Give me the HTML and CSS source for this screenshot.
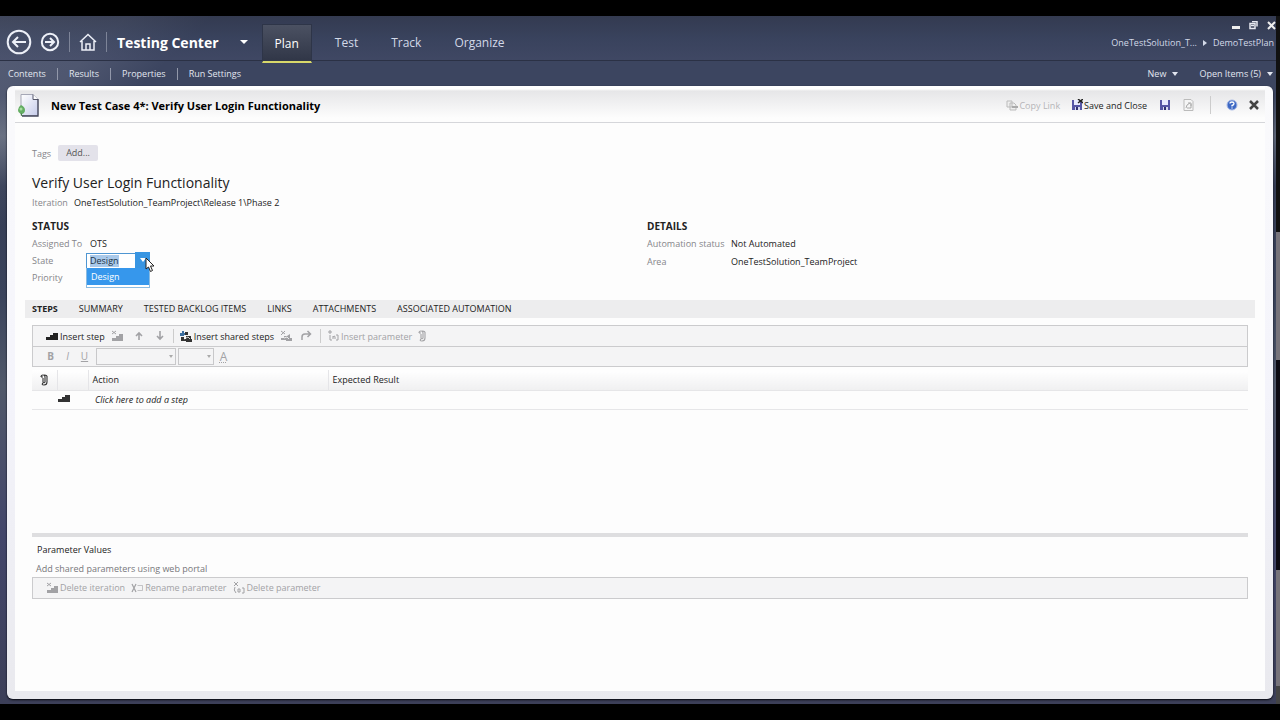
FILE: index.html
```html
<!DOCTYPE html>
<html lang="en">
<head>
<meta charset="utf-8">
<meta name="viewport" content="width=device-width, initial-scale=1">
<title>Testing Center</title>
<link rel="stylesheet" href="styles.css">
</head>
<body>
<svg class="sprite" aria-hidden="true">
  <symbol id="i-steps" viewBox="0 0 12 10"><path d="M0 6h4V4h3V2h5v7H0z" fill="currentColor"/></symbol>
  <symbol id="i-steps-x" viewBox="0 0 12 12"><path d="M1 1l4 3M5 1L1 4" stroke="currentColor" fill="none"/><path d="M1 8h4V6h3V4h4v7H1z" fill="currentColor"/></symbol>
  <symbol id="i-up" viewBox="0 0 10 12"><path d="M5 10V3M2 6l3-3 3 3" stroke="currentColor" stroke-width="1.6" fill="none"/></symbol>
  <symbol id="i-down" viewBox="0 0 10 12"><path d="M5 1v8M2 6l3 3 3-3" stroke="currentColor" stroke-width="1.6" fill="none"/></symbol>
  <symbol id="i-shared" viewBox="0 0 12 12"><path d="M0 3h2V1h2v2h3v2H4v1H0z" fill="#3b6ea0"/><path d="M5 2h3v3H5zM1 7h3v2h2V6h5v3h1v3H6v-1H1z" fill="#333"/><path d="M4 9l4-2 2 2" stroke="#fff" stroke-width=".8" fill="none"/></symbol>
  <symbol id="i-shared-x" viewBox="0 0 12 12"><path d="M1 1l4 3M5 1L1 5" stroke="currentColor" fill="none"/><path d="M1 8h3V6h3l3-2v4h2v3H6v-1H1z" fill="currentColor"/><path d="M4 8l3-1 2 2" stroke="#fff" stroke-width=".8" fill="none"/></symbol>
  <symbol id="i-redo" viewBox="0 0 12 12"><path d="M2 10V7q0-3 3-3h5M7.500 1l3 3-3 3" stroke="currentColor" stroke-width="1.500" fill="none"/></symbol>
  <symbol id="i-param" viewBox="0 0 12 12"><path d="M1 2h4M3 0v4M3 5v5h2M9 5h2v5H9M6 6v3M6 7q2-2 2 0v2" stroke="currentColor" fill="none"/></symbol>
  <symbol id="i-param-x" viewBox="0 0 12 12"><path d="M1 0l4 4M5 0L1 4M2 5q-2 3 1 6M9 6h2v5H9M5 7h2v3H5z" stroke="currentColor" fill="none"/></symbol>
  <symbol id="i-rename" viewBox="0 0 12 12"><path d="M1 2l4 8M5 2L1 10" stroke="currentColor" stroke-width="1.200" fill="none"/><path d="M6.500 3.500h5v5h-5" stroke="currentColor" fill="none" opacity=".6"/></symbol>
  <symbol id="i-clip" viewBox="0 0 8 12"><path d="M3 4v4q1 1.500 2 0V3Q5 1 3 1T1 3M7 2v6q0 3-3 3T3 9M1 3h2M7 2q-1-1-3-1" stroke="currentColor" stroke-width="1.100" fill="none"/></symbol>
  <symbol id="i-save" viewBox="0 0 12 12"><path d="M1 1h10v10H1z" fill="#5656a6"/><path d="M3 1h6v5H3z" fill="#e8eaff"/><path d="M4 8h5v3H4z" fill="#d9dbf2"/><path d="M5 8h2v3H5z" fill="#303070"/></symbol>
</svg>

<div class="screen">
  <div class="app">
    <header class="top">
      <button class="nav-btn" aria-label="Back"><svg width="26" height="26" viewBox="0 0 26 26"><circle cx="13" cy="13" r="11.300"/><path d="M20 13H7M12 8l-5 5 5 5"/></svg></button>
      <button class="nav-btn fwd" aria-label="Forward"><svg width="20" height="20" viewBox="0 0 20 20"><circle cx="10" cy="10" r="8.200"/><path d="M5 10h9M10 6l4 4-4 4"/></svg></button>
      <span class="rule"></span>
      <button class="nav-btn home" aria-label="Home"><svg width="20" height="20" viewBox="0 0 20 20"><path d="M2 10l8-7.500 8 7.500M4 9v9h12V9M8 18v-6h4v6" stroke-width="1.500"/></svg></button>
      <span class="rule"></span>
      <button class="center">Testing Center<span class="caret big"></span></button>
      <nav class="modes" aria-label="Activities">
        <a href="#" class="on">Plan</a><a href="#">Test</a><a href="#">Track</a><a href="#">Organize</a>
      </nav>
      <div class="top-right">
        <div class="win">
          <button aria-label="Minimize"><svg width="9" height="10"><path d="M1 5h8v3H1z" fill="#eee"/></svg></button>
          <button aria-label="Restore"><svg width="9" height="10"><path d="M3 .5h5v5M1 2.500h5v5H1zM2 4.500h3" fill="none" stroke="#e6e8f0" stroke-width="1.500"/></svg></button>
          <button aria-label="Close window"><svg width="9" height="10"><path d="M1 1l7 7M8 1L1 8" stroke="#eee" stroke-width="2"/></svg></button>
        </div>
        <div class="crumbs"><a href="#">OneTestSolution_T...</a><span class="tri"></span><a href="#">DemoTestPlan</a></div>
      </div>
    </header>

    <nav class="sub" aria-label="Plan">
      <a href="#">Contents</a><a href="#">Results</a><a href="#">Properties</a><a href="#">Run Settings</a>
      <div class="sub-right">
        <button>New<span class="caret"></span></button>
        <button>Open Items (5)<span class="caret"></span></button>
      </div>
    </nav>

    <main class="panel">
      <div class="panel-head">
        <svg class="doc" width="24" height="26" viewBox="0 0 24 26" aria-hidden="true">
          <defs><linearGradient id="pg" x2="1" y2="1"><stop stop-color="#fff"/><stop offset="1" stop-color="#c5cbea"/></linearGradient></defs>
          <path d="M4 2.500h12l5 5v16H4z" fill="url(#pg)" stroke="#a5a7b6"/><path d="M16 2.500v5h5" fill="#fff" stroke="#55576a"/><path d="M21 7v17H5" fill="none" stroke="#44475c" stroke-width="1.300"/>
          <path d="M4 13q4 2 4 5 0 3-3 4-4-1-4-4 0-3 3-5" fill="#63ad63"/><circle cx="4" cy="17" r="1.500" fill="#a6dda0"/><path d="M4 21l1 3" stroke="#498449"/>
        </svg>
        <h1>New Test Case 4*: Verify User Login Functionality</h1>
        <div class="actions">
          <button class="off" disabled><svg width="12" height="12" viewBox="0 0 12 12"><path d="M1 2h5v6H1zM4 4h4l2 2v5H4z" fill="#eee" stroke="#bbb"/><path d="M6 8h6" stroke="#aaa" stroke-width="2"/></svg>Copy Link</button>
          <button class="save-close"><svg width="12" height="12"><use href="#i-save"/><path d="M7 0l5 4M12 0L7 4" stroke="#222" stroke-width="1.500"/></svg>Save and Close</button>
          <button class="save" aria-label="Save"><svg width="12" height="12"><use href="#i-save"/></svg></button>
          <button class="refresh" aria-label="Refresh" disabled><svg width="11" height="12" viewBox="0 0 11 12"><path d="M1 .5h7l2 2v9H1z" fill="#f5f5f5" stroke="#bbb"/><path d="M3 9l1-3 3-2M8 5v4H4M5 4h3v3" fill="none" stroke="#aaa"/></svg></button>
          <span class="sep"></span>
          <button class="help" aria-label="Help"><svg width="12" height="12" viewBox="0 0 12 12"><circle cx="6" cy="6" r="5" fill="#3d68c4" stroke="#a9bbe6"/><path d="M4 4.500Q4 3 6 3t2 1.500Q8 6 6 6.500V7.500M6 8.500v1" stroke="#fff" stroke-width="1.300" fill="none"/></svg></button>
          <button aria-label="Close"><svg width="10" height="10"><path d="M1 1l8 8M9 1L1 9" stroke="#444" stroke-width="2.500"/></svg></button>
        </div>
      </div>

      <div class="content">
        <div class="tags"><span class="lbl">Tags</span><button>Add...</button></div>
        <h2>Verify User Login Functionality</h2>
        <div class="field iteration"><span class="lbl">Iteration</span><span>OneTestSolution_TeamProject\Release 1\Phase 2</span></div>

        <div class="groups">
          <section class="status">
            <h3>STATUS</h3>
            <div class="field"><span class="lbl">Assigned To</span><span>OTS</span></div>
            <div class="field"><label class="lbl" for="state">State</label>
              <div class="combo">
                <select id="state"><option>Design</option></select>
                <span class="combo-btn"><span class="caret"></span></span>
                <ul class="menu"><li>Design</li></ul>
                <svg class="cursor" width="10" height="16" viewBox="0 0 10 16" aria-hidden="true"><path d="M1 1v11l2.500-2 2 4.500 2-1L5.500 9H9z" fill="#fff" stroke="#222"/></svg>
              </div>
            </div>
            <div class="field"><span class="lbl">Priority</span></div>
          </section>
          <section class="details">
            <h3>DETAILS</h3>
            <div class="field"><span class="lbl">Automation status</span><span>Not Automated</span></div>
            <div class="field"><span class="lbl">Area</span><span>OneTestSolution_TeamProject</span></div>
          </section>
        </div>

        <nav class="tabs" aria-label="Test case sections">
          <a href="#" class="on">STEPS</a><a href="#">SUMMARY</a><a href="#">TESTED BACKLOG ITEMS</a><a href="#">LINKS</a><a href="#">ATTACHMENTS</a><a href="#">ASSOCIATED AUTOMATION</a>
        </nav>

        <div class="bars">
          <div class="bar">
            <button><svg width="12" height="10"><use href="#i-steps"/></svg>Insert step</button>
            <button disabled aria-label="Delete step"><svg width="12" height="12"><use href="#i-steps-x"/></svg></button>
            <button class="arrow" disabled aria-label="Move up"><svg width="10" height="12"><use href="#i-up"/></svg></button>
            <button class="arrow" disabled aria-label="Move down"><svg width="10" height="12"><use href="#i-down"/></svg></button>
            <span class="sep"></span>
            <button><svg width="12" height="12"><use href="#i-shared"/></svg>Insert shared steps</button>
            <button disabled aria-label="Create shared steps"><svg width="12" height="12"><use href="#i-shared-x"/></svg></button>
            <button class="redo" disabled aria-label="Redo"><svg width="12" height="12"><use href="#i-redo"/></svg></button>
            <span class="sep"></span>
            <button disabled><svg width="12" height="12"><use href="#i-param"/></svg>Insert parameter</button>
            <button disabled aria-label="Attach"><svg width="8" height="12"><use href="#i-clip"/></svg></button>
          </div>
          <div class="bar format">
            <button disabled><b>B</b></button><button disabled><i>I</i></button><button disabled><u>U</u></button>
            <div class="drop font"><select aria-label="Font" disabled></select><span class="caret"></span></div>
            <div class="drop size"><select aria-label="Size" disabled></select><span class="caret"></span></div>
            <button class="color" disabled>A</button>
          </div>
        </div>

        <table class="steps">
          <colgroup><col class="c1"><col class="c2"><col class="c3"><col></colgroup>
          <thead><tr><th><svg width="8" height="12" aria-label="Attachments"><use href="#i-clip"/></svg></th><th></th><th>Action</th><th>Expected Result</th></tr></thead>
          <tbody><tr><td></td><td><svg width="12" height="10" aria-hidden="true"><use href="#i-steps"/></svg></td><td><i>Click here to add a step</i></td><td></td></tr></tbody>
        </table>

        <section class="params">
          <h4>Parameter Values</h4>
          <p>Add shared parameters using web portal</p>
          <div class="bar">
            <button disabled><svg width="12" height="12"><use href="#i-steps-x"/></svg>Delete iteration</button>
            <button disabled><svg width="12" height="12"><use href="#i-rename"/></svg>Rename parameter</button>
            <button disabled><svg width="12" height="12"><use href="#i-param-x"/></svg>Delete parameter</button>
          </div>
        </section>
      </div>
    </main>
  </div>
  <div class="edge"></div>
</div>
</body>
</html>
```

FILE: styles.css
```css
* { box-sizing: border-box; }
body {
  margin: 0;
  background: #000;
  color: #222;
  font: 9px/17px "Open Sans", "Noto Sans", sans-serif;
}
h1, h2, h3, h4, p, ul { margin: 0; padding: 0; }
ul { list-style: none; }
a { color: inherit; text-decoration: none; }
button { font: inherit; color: inherit; background: none; border: 0; padding: 0; white-space: nowrap; }
svg { display: block; flex: none; }
.sprite { display: none; }

.screen {
  display: flex;
  min-height: 100vh;
  padding: 16px 0;
}
.app {
  flex: 1;
  min-width: 0;
  display: flex;
  flex-direction: column;
  background:
    linear-gradient(135deg, #a0a4b440 0, #a0a4b430 90px, transparent 150px),
    linear-gradient(#3c4560 80px, #5d6577 120px, #353d55 170px, #3a435c 280px, #50586a 370px, #42456a 520px, #3c3f58);
}
.edge {
  width: 4px;
  background:
    linear-gradient(#111 0 216px, #77747b 216px 344px, #0c0a12 344px 554px, #77747b 554px 670px, #444 670px);
}
.caret { display: inline-block; border: 3px solid transparent; border-top: 4px solid currentColor; border-bottom: 0; }
.caret.big { border-width: 4px 4px 0; }

/* Title bar */
.top {
  display: flex;
  align-items: center;
  height: 45px;
  padding: 8px 0 0 6px;
  border-bottom: 1px solid #2b3145;
  background: linear-gradient(#2b304180, #36405a80 50%, #434a6780);
  color: #d3d9e8;
}
.nav-btn svg { fill: none; stroke: #edf0f8; stroke-width: 2; }
.fwd { margin: 0 9px 0 8px; }
.home { margin: 0 8px; }
.rule { width: 1px; height: 20px; background: #7d8498; }
.center { display: flex; align-items: center; gap: 21px; margin-left: 10px; color: #fff; font-size: 14px; font-weight: 700; }
.modes { display: flex; align-self: stretch; margin-left: 14px; font-size: 12px; }
.modes a { display: flex; align-items: center; padding: 0 15px; margin-right: 3px; }
.modes .on {
  padding: 0 12px;
  color: #fff;
  margin: 0 8px -3px 0;
  border: 1px solid #2e3548;
  border-bottom: 2px solid #d8d86a;
  background: linear-gradient(#4b5162, #303647);
}
.top-right { align-self: stretch; display: flex; flex-direction: column; align-items: flex-end; margin: -8px 0 0 auto; }
.win { display: flex; gap: 9px; height: 18px; padding-top: 1px; }
.crumbs { display: flex; align-items: center; gap: 6px; padding-right: 2px; }
.tri { border: 3px solid transparent; border-left: 4px solid currentColor; border-right: 0; }

/* Secondary navigation */
.sub { display: flex; align-items: center; height: 25px; padding: 0 3px 0 8px; color: #e2e6f0; }
.sub > a { line-height: 12px; }
.sub > a + a { border-left: 1px solid #9298aa; padding-left: 11px; margin-left: 11px; }
.sub-right { display: flex; gap: 21px; margin-left: auto; }
.sub button { display: flex; align-items: center; gap: 6px; }

/* Panel */
.panel {
  flex: 1;
  margin: 0 3px 5px 7px;
  border: solid transparent;
  border-width: 0 8px 8px;
  border-radius: 6px;
  background:
    linear-gradient(#fdfdfd, #fdfdfd) padding-box,
    linear-gradient(#fafafc, #f4f4fb 50%, #e9e9ee) border-box;
  box-shadow: 0 1px 2px #05060c, inset 0 2px #fff;
}
.panel-head {
  display: flex;
  align-items: center;
  height: 37px;
  padding: 2px 6px 0 2px;
  border-bottom: 1px solid #d5d6da;
  background: linear-gradient(#fff 3px, #e6e6e8 5px, #fdfdfd 32px);
}
h1 { margin-left: 10px; color: #000; font-size: 11px; font-weight: 700; }
.actions { display: flex; align-items: center; margin-left: auto; color: #222; }
.actions button { display: flex; align-items: center; gap: 1px; }
.actions .off { color: #b5b5b8; }
.save-close { margin: 0 12px 0 11px; }
.actions .refresh { margin: 0 16px 0 12px; }
.actions .sep { height: 18px; margin: 0 15px 0 0; }
.actions .help { margin-right: 11px; }
.sep { width: 1px; background: #ccc; }

.content { padding: 22px 10px 10px; }
.content > * { margin-left: 7px; margin-right: 7px; }
.lbl { color: #85858a; }
.tags { display: flex; align-items: center; gap: 7px; height: 16px; }
.tags button { padding: 0 8px; line-height: 16px; background: #e3e2ea; color: #555; border-radius: 2px; }
h2 { margin-top: 11px; color: #222; font-size: 14px; font-weight: 400; line-height: 22px; }
.field { display: flex; gap: 6px; height: 17px; white-space: nowrap; }
.iteration { height: 24px; }
.groups { display: grid; grid-template-columns: 1fr 1fr; gap: 14px; }
h3 { color: #222; font-size: 10px; font-weight: 700; }
.status .lbl { width: 54px; flex: none; }
.status .field { gap: 4px; }
.status .field:has(.combo) { gap: 0; }
.details .lbl { width: 84px; flex: none; }
.details .field { gap: 0; }
.details .field + .field { margin-top: 1px; }
.combo { position: relative; width: 64px; height: 16px; font-size: 9px; }
.combo select {
  appearance: none;
  width: 100%;
  height: 16px;
  padding: 0 3px;
  border: 1px solid #4f96d2;
  border-radius: 0;
  color: #234;
  font: inherit;
  line-height: 14px;
  background: linear-gradient(#a9c9ea, #a9c9ea) 3px 1px / 29px 12px no-repeat #fff;
}
.combo-btn { position: absolute; top: 0; right: 0; display: grid; place-items: center; width: 15px; height: 16px; background: #3895e2; color: #fff; pointer-events: none; }
.menu { position: absolute; top: 16px; left: 0; right: 0; z-index: 1; padding-bottom: 2px; border: 1px solid #8abbe2; border-top: 0; background: #fff; }
.menu li { height: 17px; padding-left: 4px; color: #fff; background: #3697ec; }
.cursor { position: absolute; left: 59px; top: 5px; z-index: 2; }

.tabs { display: flex; gap: 21px; margin: 14px 0 7px; padding: 0 7px; line-height: 18px; background: #ededee; white-space: nowrap; }
.tabs .on { font-weight: 700; }

.bar { display: flex; align-items: center; height: 22px; padding: 0 13px; border: 1px solid #cbcbcd; background: #f4f4f5; }
.bar button { display: flex; align-items: center; gap: 2px; margin-right: 6px; }
.bar button:disabled { color: #a2a2a5; }
.bar .arrow { margin: 0 6px 0 5px; }
.bar .sep { height: 14px; margin: 0 6px 0 2px; }
.bar .redo { margin-left: 2px; }
.bar.format { height: 21px; margin-top: -1px; padding-left: 9px; }
.format button { width: 17px; margin: 0; justify-content: center; font-size: 10px; }
.drop { position: relative; height: 17px; border: 1px solid #c8c8ca; }
.drop select { appearance: none; display: block; width: 100%; height: 100%; border: 0; background: none; }
.drop .caret { position: absolute; right: 2px; top: 6px; border-width: 3px 2px 0; color: #aaa; pointer-events: none; }
.font { width: 80px; margin: 0 2px 0 3px; }
.size { width: 36px; margin-right: 1px; }
.format .color { font-size: 12px; text-decoration: underline dotted; }

.steps { width: calc(100% - 14px); margin-top: 3px; border-collapse: collapse; table-layout: fixed; }
.c1 { width: 25px; }
.c2 { width: 31px; }
.c3 { width: 240px; }
.steps th, .steps td { height: 19px; padding: 0 4px; text-align: left; font-weight: 400; border-bottom: 1px solid #e6e6e8; }
.steps th { height: 20px; border-right: 1px solid #e5e5e8; background: linear-gradient(#fff, #f0f0f1); }
.steps th:last-child { border-right: 0; }
.steps th svg { margin-left: 4px; }
.steps td:nth-child(2) { padding: 0 1px; }
.steps td:nth-child(3) { padding-left: 7px; }
.steps td svg { margin-bottom: 4px; }
.steps use { color: #333; }

.params { margin-top: 123px; border-top: 4px solid #dedee0; padding-top: 4px; }
h4 { padding-left: 5px; font-size: 9px; font-weight: 400; color: #222; }
.params p { padding: 3px 4px 0; line-height: 16px; color: #77777b; }
```
